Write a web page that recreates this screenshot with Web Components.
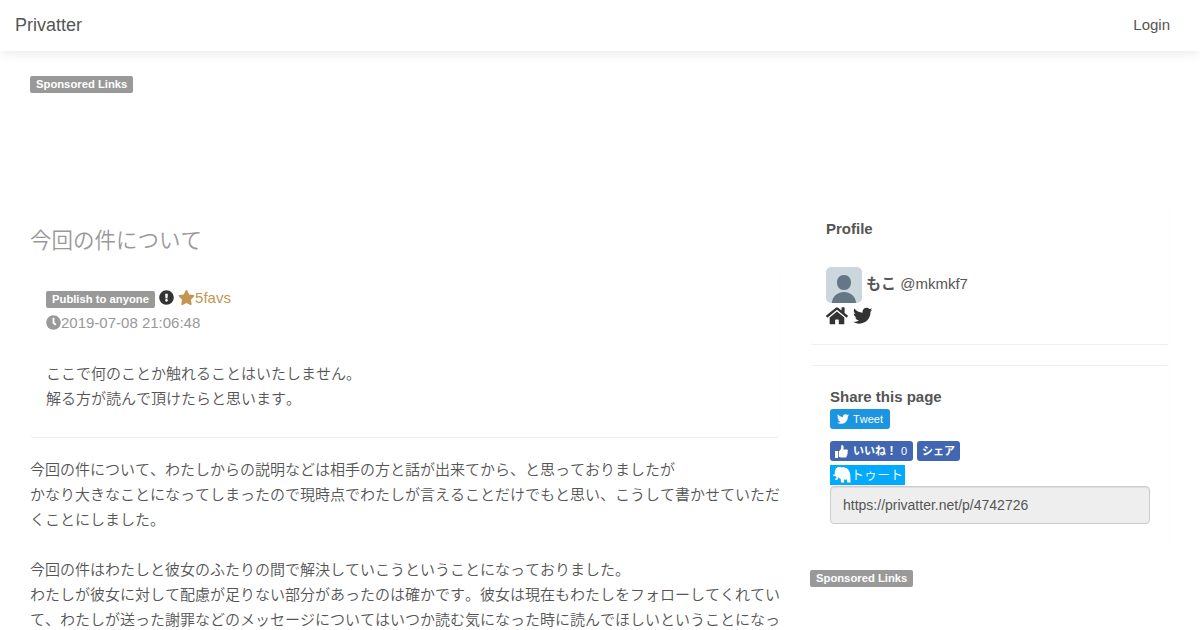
<!DOCTYPE html>
<html lang="ja">
<head>
<meta charset="utf-8">
<title>Privatter</title>
<style>
  body {
    margin: 0;
    height: 630px;
    overflow: hidden;
    background: #fff;
    color: #555;
    font-family: "Liberation Sans", "Noto Sans CJK JP", sans-serif;
    font-size: 15px;
    font-kerning: none;
    line-height: 25px;
  }
</style>
</head>
<body>
<privatter-page></privatter-page>

<script>
const icons = {
  home: ["0 0 576 512", "M280.37 148.26L96 300.11V464a16 16 0 0 0 16 16l112.06-.29a16 16 0 0 0 15.92-16V368a16 16 0 0 1 16-16h64a16 16 0 0 1 16 16v95.64a16 16 0 0 0 16 16.05L464 480a16 16 0 0 0 16-16V300L295.67 148.26a12.19 12.19 0 0 0-15.3 0zM571.6 251.47L488 182.56V44.05a12 12 0 0 0-12-12h-56a12 12 0 0 0-12 12v72.61L318.47 43a48 48 0 0 0-61 0L4.34 251.47a12 12 0 0 0-1.6 16.9l25.5 31A12 12 0 0 0 45.15 301l235.22-193.74a12.19 12.19 0 0 1 15.3 0L530.9 301a12 12 0 0 0 16.9-1.6l25.5-31a12 12 0 0 0-1.7-16.93z"],
  twitter: ["0 0 512 512", "M459.37 151.716c.325 4.548.325 9.097.325 13.645 0 138.72-105.583 298.558-298.558 298.558-59.452 0-114.68-17.219-161.137-47.106 8.447.974 16.568 1.299 25.34 1.299 49.055 0 94.213-16.568 130.274-44.832-46.132-.975-84.792-31.188-98.112-72.772 6.498.974 12.995 1.624 19.818 1.624 9.421 0 18.843-1.3 27.614-3.573-48.081-9.747-84.143-51.98-84.143-102.985v-1.299c13.969 7.797 30.214 12.67 47.431 13.319-28.264-18.843-46.781-51.005-46.781-87.391 0-19.492 5.197-37.36 14.294-52.954 51.655 63.675 129.3 105.258 216.365 109.807-1.624-7.797-2.599-15.918-2.599-24.04 0-57.828 46.782-104.934 104.934-104.934 30.213 0 57.502 12.67 76.67 33.137 23.715-4.548 46.456-13.32 66.599-25.34-7.798 24.366-24.366 44.833-46.132 57.827 21.117-2.273 41.584-8.122 60.426-16.243-14.292 20.791-32.161 39.308-52.628 54.253z"],
  exclamation: ["0 0 512 512", "M504 256c0 136.997-111.043 248-248 248S8 392.997 8 256C8 119.083 119.043 8 256 8s248 111.083 248 248zm-248 50c-25.405 0-46 20.595-46 46s20.595 46 46 46 46-20.595 46-46-20.595-46-46-46zm-43.673-165.346l7.418 136c.347 6.364 5.609 11.346 11.982 11.346h48.546c6.373 0 11.635-4.982 11.982-11.346l7.418-136c.375-6.874-5.098-12.654-11.982-12.654h-63.383c-6.884 0-12.356 5.78-11.981 12.654z"],
  clock: ["0 0 512 512", "M256,8C119,8,8,119,8,256S119,504,256,504,504,393,504,256,393,8,256,8Zm92.49,313h0l-20,25a16,16,0,0,1-22.49,2.5h0l-67-49.72a40,40,0,0,1-15-31.23V112a16,16,0,0,1,16-16h32a16,16,0,0,1,16,16V256l58,42.5A16,16,0,0,1,348.49,321Z"],
  star: ["0 0 576 512", "M259.3 17.8L194 150.2 47.9 171.5c-26.2 3.8-36.7 36.1-17.7 54.6l105.7 103-25 145.5c-4.5 26.3 23.2 46 46.4 33.7L288 439.6l130.7 68.7c23.2 12.2 50.9-7.4 46.4-33.7l-25-145.5 105.7-103c19-18.5 8.5-50.8-17.7-54.6L382 150.2 316.7 17.8c-11.7-23.6-45.6-23.9-57.4 0z"],
  thumb: ["0 0 13 13", "M0 6h3v7H0zM3.800 6.200C5.600 5.400 6.200 3.800 6.200 2V.7C6.300-.2 8.300-.2 8.600 1.800c.1 1-.1 1.900-.4 2.800h3.300c1.700 0 1.800 1.900.8 2.300.9.600.6 1.800-.2 2.100.5.700.2 1.600-.6 1.900.3 1-.3 1.600-1.300 1.600H7.200c-1.500 0-2.300-.4-3.400-.7z"],
  mammoth: ["0 0 18 18", "M3.200 2.300C4.500.900 6.500.700 8.300 1.500c3.700-.6 6.500.8 7.800 3.500 1.200 2.200 1.300 4.300 1.300 7L17.600 16.400h-3.300l-.4-3.200c-.9.5-1.900.6-2.900.4l.2 2.800H8.100l-.5-3.500c-1.100-.2-1.900-.8-2.400-1.700-.2 1.300-.6 2.900-1.800 2.900-1.100 0-1.500-.9-1.300-1.900l.8.5c.5-.4.6-1.200.4-2.200L.500 9.800c-.7-.6-.4-1.500.3-1.300l1.100.3C1.600 6.500 1.700 4 3.200 2.300z"]
};

class AppIcon extends HTMLElement {
  connectedCallback() {
    const [box, path] = icons[this.getAttribute("name")];
    this.attachShadow({ mode: "open" }).innerHTML = `
      <style>
        :host { display: inline-block; height: 1em; line-height: 1; vertical-align: -0.125em; }
        svg { display: block; height: 1em; fill: currentColor; }
      </style>
      <svg viewBox="${box}"><path d="${path}"/></svg>
    `;
  }
}
window.customElements.define("app-icon", AppIcon);

class AppLabel extends HTMLElement {
  connectedCallback() {
    this.attachShadow({ mode: "open" }).innerHTML = `
      <style>
        :host {
          display: inline-block;
          padding: 3px 6px;
          background: #999;
          color: #fff;
          border-radius: 2px;
          font-size: 11.25px;
          font-weight: bold;
          line-height: 11px;
          vertical-align: baseline;
        }
      </style>
      <slot></slot>
    `;
  }
}
window.customElements.define("app-label", AppLabel);

class NavBar extends HTMLElement {
  connectedCallback() {
    this.attachShadow({ mode: "open" }).innerHTML = `
      <style>
        :host {
          display: flex;
          justify-content: space-between;
          align-items: center;
          box-sizing: border-box;
          height: 51px;
          padding: 0 30px 0 15px;
          background: #fff;
          box-shadow: 0 0 12px rgba(0, 0, 0, .12);
        }
        .brand { font-size: 18px; }
        .login { padding-bottom: 2px; }
      </style>
      <span class="brand">Privatter</span>
      <span class="login">Login</span>
    `;
  }
}
window.customElements.define("nav-bar", NavBar);

class PostHeader extends HTMLElement {
  connectedCallback() {
    this.attachShadow({ mode: "open" }).innerHTML = `
      <style>
        :host {
          display: block;
          box-sizing: border-box;
          height: 168px;
          margin-top: 14px;
          padding: 15px 16px;
          border: 1px solid #fdfdfd;
          border-width: 0 1px 1px 0;
          border-bottom-color: #eee;
          border-radius: 4px;
        }
        .exclamation { color: #333; }
        .favs { color: #c29650; }
        .date { color: #999; }
        .comment { margin-top: 26px; }
      </style>
      <div>
        <app-label>Publish to anyone</app-label>
        <app-icon class="exclamation" name="exclamation"></app-icon>
        <span class="favs"><app-icon name="star"></app-icon>5favs</span>
      </div>
      <div class="date"><app-icon name="clock"></app-icon>2019-07-08 21:06:48</div>
      <div class="comment"><slot></slot></div>
    `;
  }
}
window.customElements.define("post-header", PostHeader);

class ProfilePanel extends HTMLElement {
  connectedCallback() {
    this.attachShadow({ mode: "open" }).innerHTML = `
      <style>
        :host {
          display: block;
          box-sizing: border-box;
          height: 140px;
          padding: 11px 16px 0 15px;
          border: 1px solid #fdfdfd;
          border-width: 0 1px 1px;
          border-bottom-color: #eee;
          border-radius: 4px;
        }
        h4 { margin: 0 0 26px; font-size: 15px; line-height: 25px; }
        .user { display: flex; align-items: center; gap: 4px; height: 36px; }
        .user span { padding-bottom: 4px; }
        .avatar { display: block; width: 36px; height: 36px; border-radius: 5px; }
        .links { display: flex; gap: 5px; margin-top: 3px; color: #333; font-size: 19.5px; }
      </style>
      <h4>Profile</h4>
      <div class="user">
        <svg class="avatar" viewBox="0 0 36 36">
          <path fill="#ccd6dd" d="M0 0h36v36H0z"/>
          <path fill="#657786" d="M18 8c4.500 0 7 3.300 7 7.500S22.500 23 18 23s-7-3.300-7-7.500S13.500 8 18 8zM6 36c0-6 5-11 12-11s12 5 12 11z"/>
        </svg>
        <span><b>もこ</b> @mkmkf7</span>
      </div>
      <div class="links"><app-icon name="home"></app-icon><app-icon name="twitter"></app-icon></div>
    `;
  }
}
window.customElements.define("profile-panel", ProfilePanel);

class SharePanel extends HTMLElement {
  connectedCallback() {
    this.attachShadow({ mode: "open" }).innerHTML = `
      <style>
        :host {
          display: block;
          box-sizing: border-box;
          height: 184px;
          margin-top: 20px;
          padding: 18px 20px 0 19px;
          border: 1px solid #fdfdfd;
          border-width: 1px 1px 0;
          border-top-color: #eee;
          border-radius: 4px;
        }
        h4 { margin: 0; font-size: 15px; line-height: 25px; }
        .button {
          display: flex;
          align-items: center;
          box-sizing: border-box;
          height: 20px;
          border-radius: 3px;
          color: #fff;
          font-size: 11px;
          line-height: 20px;
          white-space: nowrap;
        }
        .tweet { width: 60px; padding-left: 7px; gap: 4px; background: #1b95e0; }
        .tweet app-icon { font-size: 12px; }
        .facebook { display: flex; gap: 4px; margin-top: 12px; }
        .facebook .button { background: #4267b2; font-weight: bold; }
        .like { width: 83px; padding-left: 5px; }
        .like app-icon { margin-right: 5px; font-size: 13px; }
        .count { margin-left: 4px; font-weight: normal; }
        .share { width: 43px; justify-content: center; }
        .toot {
          width: 75px;
          margin-top: 4px;
          padding-left: 3px;
          border-radius: 0;
          background: #0af;
          font-size: 13px;
          font-weight: 350;
        }
        .toot app-icon { font-size: 18px; }
        input {
          display: block;
          box-sizing: border-box;
          width: 320px;
          height: 38px;
          margin: 1px 0 0;
          padding: 6px 12px;
          border: 1px solid #ccc;
          border-radius: 4px;
          background: #eee;
          box-shadow: inset 0 1px 1px rgba(0, 0, 0, .075);
          color: #555;
          font: 14px "Liberation Sans", sans-serif;
        }
      </style>
      <h4>Share this page</h4>
      <div class="button tweet"><app-icon name="twitter"></app-icon><span>Tweet</span></div>
      <div class="facebook">
        <div class="button like"><app-icon name="thumb"></app-icon><span>いいね！</span><span class="count">0</span></div>
        <div class="button share">シェア</div>
      </div>
      <div class="button toot"><app-icon name="mammoth"></app-icon><span>トゥート</span></div>
      <input readonly value="https://privatter.net/p/4742726">
    `;
  }
}
window.customElements.define("share-panel", SharePanel);

class PrivatterPage extends HTMLElement {
  connectedCallback() {
    this.attachShadow({ mode: "open" }).innerHTML = `
      <style>
        :host { display: block; }
        .ad { display: flex; height: 129px; padding: 25px 30px 0; align-items: flex-start; }
        .columns { display: grid; grid-template-columns: 750px 360px; gap: 30px; padding: 0 30px; }
        h1 { margin: 21px 0 0; color: #999; font-size: 21.5px; font-weight: 350; line-height: 30px; }
        .jp { font-weight: 350; }
        .body { margin: 19px 0 0; font-weight: 350; line-height: 25px; }
        .side-label { display: block; width: max-content; margin-top: 21px; }
      </style>
      <nav-bar></nav-bar>
      <div class="ad"><app-label>Sponsored Links</app-label></div>
      <div class="columns">
        <main>
          <h1>今回の件について</h1>
          <post-header><span class="jp">ここで何のことか触れることはいたしません。<br>解る方が読んで頂けたらと思います。</span></post-header>
          <p class="body">今回の件について、わたしからの説明などは相手の方と話が出来てから、と思っておりましたが<br>かなり大きなことになってしまったので現時点でわたしが言えることだけでもと思い、こうして書かせていただくことにしました。<br><br>今回の件はわたしと彼女のふたりの間で解決していこうということになっておりました。<br>わたしが彼女に対して配慮が足りない部分があったのは確かです。彼女は現在もわたしをフォローしてくれていて、わたしが送った謝罪などのメッセージについてはいつか読む気になった時に読んでほしいということになっ</p>
        </main>
        <aside>
          <profile-panel></profile-panel>
          <share-panel></share-panel>
          <app-label class="side-label">Sponsored Links</app-label>
        </aside>
      </div>
    `;
  }
}
window.customElements.define("privatter-page", PrivatterPage);
</script>
</body>
</html>
